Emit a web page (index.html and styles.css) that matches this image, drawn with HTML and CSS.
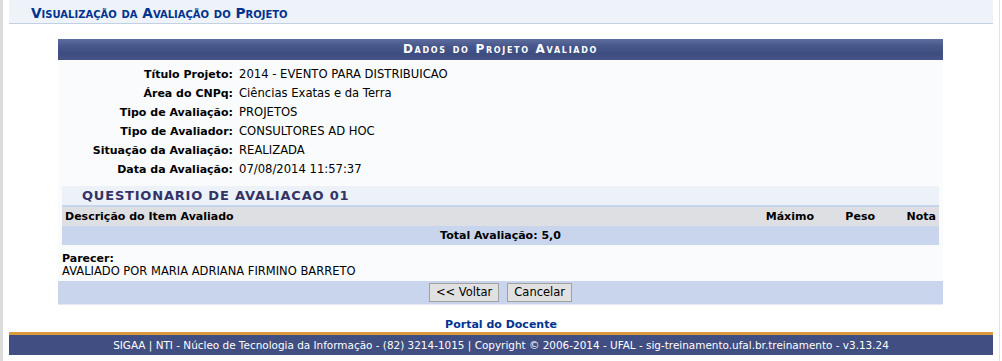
FILE: index.html
```html
<!DOCTYPE html>
<html lang="pt-BR">
<head>
<meta charset="utf-8">
<title>Visualização da Avaliação do Projeto</title>
<link rel="stylesheet" href="styles.css">
</head>
<body>
<div class="frame">
  <div class="page">
    <h2 class="page-title">Visualização da Avaliação do Projeto</h2>

    <div class="form">
      <div class="caption">Dados do Projeto Avaliado</div>
      <div class="form-body">
        <dl class="fields">
          <dt>Título Projeto:</dt><dd>2014 - EVENTO PARA DISTRIBUICAO</dd>
          <dt>Área do CNPq:</dt><dd>Ciências Exatas e da Terra</dd>
          <dt>Tipo de Avaliação:</dt><dd>PROJETOS</dd>
          <dt>Tipo de Avaliador:</dt><dd>CONSULTORES AD HOC</dd>
          <dt>Situação da Avaliação:</dt><dd>REALIZADA</dd>
          <dt>Data da Avaliação:</dt><dd>07/08/2014 11:57:37</dd>
        </dl>

        <div class="quest">
          <div class="quest-title">QUESTIONARIO DE AVALIACAO 01</div>
          <div class="quest-head">
            <span class="col-desc">Descrição do Item Avaliado</span>
            <span class="col-max">Máximo</span>
            <span class="col-peso">Peso</span>
            <span class="col-nota">Nota</span>
          </div>
          <div class="quest-total">Total Avaliação: 5,0</div>
        </div>

        <div class="parecer">
          <div class="parecer-label">Parecer:</div>
          <div class="parecer-text">AVALIADO POR MARIA ADRIANA FIRMINO BARRETO</div>
        </div>
      </div>
      <div class="form-foot">
        <button class="btn" type="button">&lt;&lt; Voltar</button>
        <button class="btn" type="button">Cancelar</button>
      </div>
    </div>

    <div class="portal"><a href="#">Portal do Docente</a></div>

    <div class="rodape">SIGAA | NTI - Núcleo de Tecnologia da Informação - (82) 3214-1015 | Copyright © 2006-2014 - UFAL - sig-treinamento.ufal.br.treinamento - v3.13.24</div>
  </div>
</div>
</body>
</html>
```

FILE: styles.css
```css
* { box-sizing: border-box; }

html, body {
  margin: 0;
  padding: 0;
  background: #ffffff;
}

body {
  font-family: "DejaVu Sans", Verdana, sans-serif;
  font-size: 11px;
  color: #000;
}

.frame {
  width: 1002px;
  height: 361px;
  border-left: 3px solid #dcdcdc;
  display: flex;
  padding-left: 6px;
  padding-right: 6px;
  position: relative;
}

.frame::after {
  content: "";
  position: absolute;
  top: 0;
  bottom: 0;
  right: 2px;
  width: 1px;
  background: #e3e3e3;
}

.page {
  width: 984px;
  display: flex;
  flex-direction: column;
}

.page-title {
  margin: 0;
  height: 24px;
  padding: 5px 0 0 22px;
  background: #eef2f9;
  border-bottom: 1px solid #c3cfe3;
  font-size: 13.7px;
  font-variant: small-caps;
  font-weight: bold;
  color: #003390;
  line-height: 17px;
}

.form {
  width: 885px;
  margin: 15px 0 0 49px;
  background: #f9fbfd;
}

.caption {
  height: 21px;
  background: linear-gradient(#5e6d9e 0%, #47578a 35%, #3e4d7f 70%, #45538a 100%);
  color: #fff;
  font-weight: bold;
  font-variant: small-caps;
  letter-spacing: 1.7px;
  text-align: center;
  line-height: 21px;
  font-size: 12px;
}

.form-body {
  padding: 5px 4px 0 4px;
}

.fields {
  display: grid;
  grid-template-columns: 177px 1fr;
  margin: 0;
  line-height: 19px;
}

.fields dt {
  text-align: right;
  font-weight: bold;
  padding-right: 6px;
}

.fields dd {
  margin: 0;
  font-size: 11.6px;
}

.quest {
  margin-top: 7px;
}

.quest-title {
  height: 21px;
  background: #edf1f8;
  border-bottom: 2px solid #c6d4ec;
  color: #333366;
  font-weight: bold;
  font-size: 13px;
  letter-spacing: 0.8px;
  padding-left: 20px;
  line-height: 20px;
}

.quest-head {
  display: flex;
  height: 19px;
  line-height: 19px;
  background: #dedfe3;
  font-weight: bold;
  padding: 0 3px;
}

.col-desc { flex: 1; }
.col-max { width: 50px; text-align: right; }
.col-peso { width: 61px; text-align: right; }
.col-nota { width: 61px; text-align: right; }

.quest-total {
  height: 19px;
  line-height: 20px;
  background: #c8d5ec;
  font-weight: bold;
  text-align: center;
}

.parecer {
  padding: 7px 0 3px 0;
  line-height: 13px;
}

.parecer-label { font-weight: bold; }

.parecer-text { font-size: 11.5px; }

.form-foot {
  height: 24px;
  background: #c8d5ec;
  display: flex;
  justify-content: center;
  align-items: center;
  gap: 8px;
  border-bottom: 1px solid #e4e9f2;
}

.btn {
  font-family: "DejaVu Sans", Verdana, sans-serif;
  font-size: 11.5px;
  color: #000;
  background: #e1e1e1;
  border: 1px solid #a0a0a0;
  border-radius: 0;
  height: 19px;
  padding: 0 6px;
  line-height: 15px;
}

.portal {
  text-align: center;
  margin-top: 13px;
  line-height: 13px;
}

.portal a {
  color: #003390;
  font-weight: bold;
  text-decoration: none;
}

.rodape {
  margin-top: 1px;
  border-top: 3px solid #d99a3d;
  background: #404e82;
  color: #fff;
  text-align: center;
  height: 23px;
  line-height: 20px;
  font-size: 10.45px;
}
```
